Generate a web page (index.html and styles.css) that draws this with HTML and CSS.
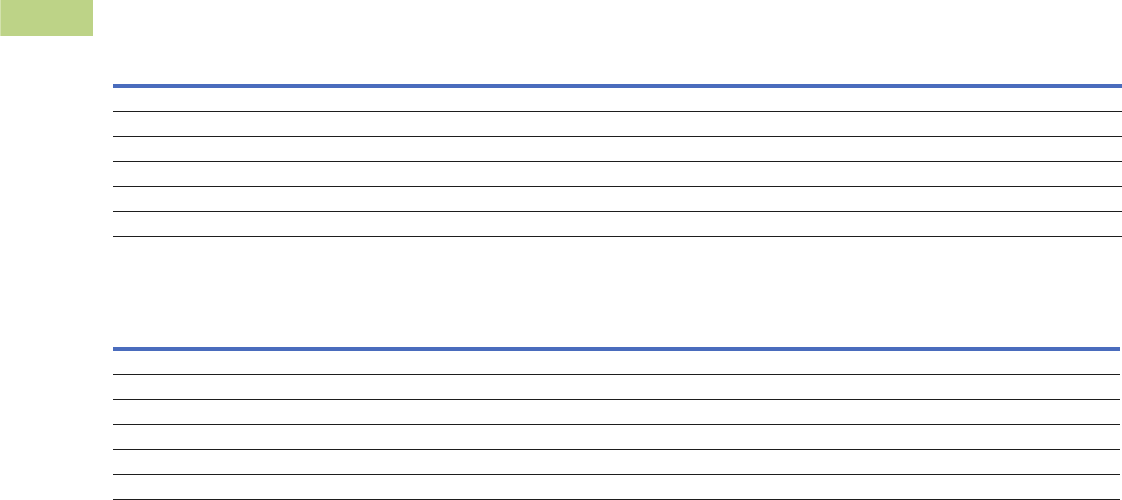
FILE: index.html
```html
<!DOCTYPE html>
<html lang="en">
<head>
<meta charset="utf-8">
<title>Tables</title>
<link rel="stylesheet" href="styles.css">
</head>
<body>
<div class="page">
  <div class="tag"></div>
  <div class="grid grid-first">
    <div class="row"></div>
    <div class="row"></div>
    <div class="row"></div>
    <div class="row"></div>
    <div class="row"></div>
    <div class="row"></div>
  </div>
  <div class="grid grid-second">
    <div class="row"></div>
    <div class="row"></div>
    <div class="row"></div>
    <div class="row"></div>
    <div class="row"></div>
    <div class="row"></div>
  </div>
</div>
</body>
</html>
```
FILE: styles.css
```css
html, body {
  margin: 0;
  padding: 0;
  background: #ffffff;
  font-family: "Liberation Sans", Arial, sans-serif;
}

.page {
  display: flex;
  flex-direction: column;
  width: 1122px;
  height: 500px;
  overflow: hidden;
}

.tag {
  width: 93px;
  height: 36px;
  background: #bdd387;
  border-left: 1px solid #d3e2ad;
  box-sizing: border-box;
  flex: none;
}

.grid {
  display: flex;
  flex-direction: column;
  margin-left: 113px;
  border-top: 4px solid #4a6cbd;
  flex: none;
}

.grid-first {
  margin-top: 48px;
  margin-right: 0;
}

.grid-second {
  margin-top: 110px;
  margin-right: 2px;
}

.row {
  height: 24px;
  border-bottom: 1px solid #1e1e1e;
  flex: none;
}

.row:first-child {
  height: 23px;
}
```
